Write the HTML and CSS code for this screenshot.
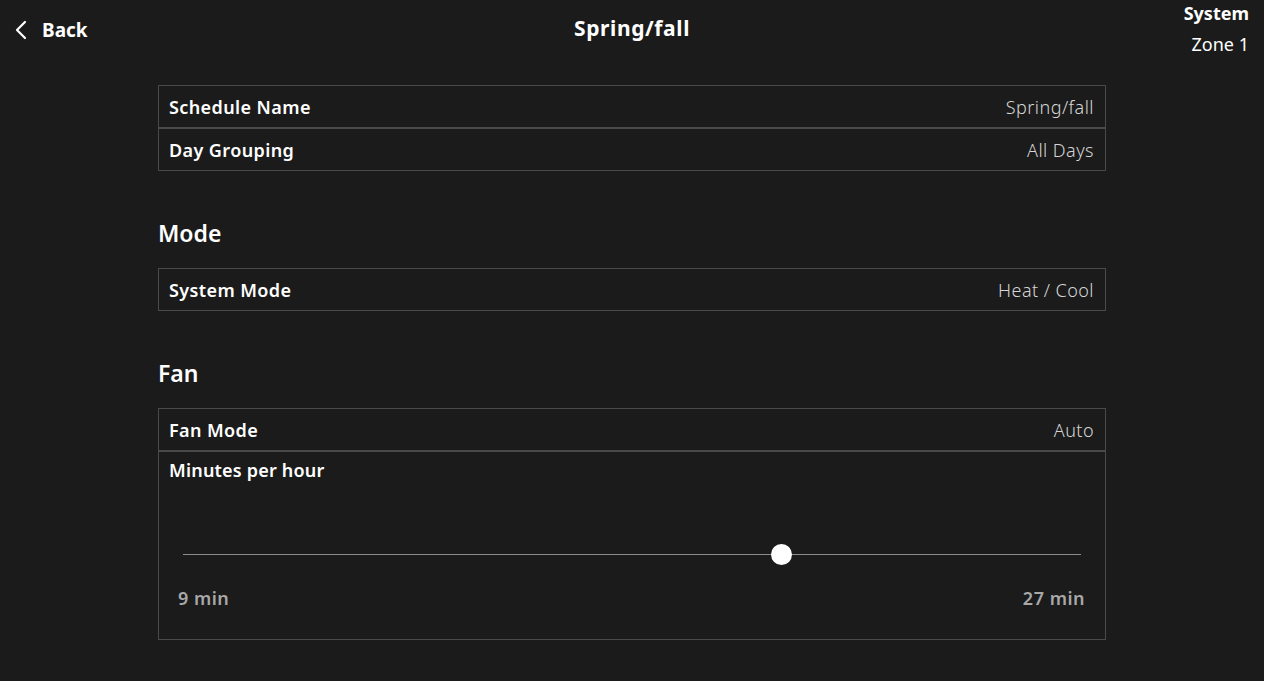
FILE: index.html
```html
<!DOCTYPE html>
<html>
<head>
<meta charset="utf-8">
<link rel="stylesheet" href="styles.css">
</head>
<body>
<div class="app">
  <header class="topbar">
    <div class="back">
      <svg class="chev" width="14" height="20" viewBox="0 0 14 20"><path d="M11 2 L3 10 L11 18" fill="none" stroke="#fff" stroke-width="2.2" stroke-linecap="round" stroke-linejoin="round"/></svg>
      <span>Back</span>
    </div>
    <div class="title">Spring/fall</div>
    <div class="zone">
      <div class="zone-top">System</div>
      <div class="zone-sub">Zone 1</div>
    </div>
  </header>

  <main class="content">
    <div class="group">
      <div class="row"><span class="label">Schedule Name</span><span class="value">Spring/fall</span></div>
      <div class="row"><span class="label">Day Grouping</span><span class="value">All Days</span></div>
    </div>

    <h2 class="section">Mode</h2>
    <div class="group">
      <div class="row"><span class="label">System Mode</span><span class="value">Heat / Cool</span></div>
    </div>

    <h2 class="section">Fan</h2>
    <div class="group">
      <div class="row"><span class="label">Fan Mode</span><span class="value">Auto</span></div>
      <div class="slider-box">
        <div class="label">Minutes per hour</div>
        <div class="track-wrap">
          <div class="track">
            <div class="thumb" style="left: 66.6%"></div>
          </div>
        </div>
        <div class="range">
          <span>9 min</span>
          <span>27 min</span>
        </div>
      </div>
    </div>
  </main>
</div>
</body>
</html>
```

FILE: styles.css
```css
* { box-sizing: border-box; }
html, body {
  margin: 0;
  padding: 0;
  background: #1b1b1b;
  color: #fff;
  font-family: "Noto Sans", "Open Sans", sans-serif;
}
.app {
  width: 1264px;
  height: 681px;
  overflow: hidden;
}
.topbar {
  display: grid;
  grid-template-columns: 1fr auto 1fr;
  align-items: start;
  height: 60px;
}
.back {
  display: flex;
  align-items: center;
  gap: 14px;
  padding: 17px 0 0 14px;
  font-weight: 700;
  font-size: 19px;
}
.chev { display: block; }
.title {
  padding-top: 13px;
  font-weight: 700;
  font-size: 21px;
  line-height: 30px;
  letter-spacing: 0.6px;
}
.zone {
  justify-self: end;
  text-align: right;
  margin-top: -1px;
  padding: 0 15px 0 0;
  font-size: 18px;
  line-height: 29px;
}
.zone-top { font-weight: 700; }
.zone-sub { margin-top: 2px; }
.content {
  width: 948px;
  margin: 25px auto 0;
}
.group {
  display: flex;
  flex-direction: column;
}
.row {
  display: flex;
  justify-content: space-between;
  align-items: center;
  height: 43px;
  border: 1px solid #4a4a4a;
  padding: 0 11px 0 10px;
}
.label {
  font-weight: 600;
  font-size: 18px;
  letter-spacing: 0.4px;
  color: #fff;
}
.value {
  font-weight: 300;
  font-size: 18px;
  letter-spacing: 0.45px;
  color: #d6d6d6;
}
.section {
  margin: 47px 0 20px;
  font-size: 23px;
  font-weight: 600;
  line-height: 30px;
}
.slider-box {
  height: 189px;
  border: 1px solid #4a4a4a;
  padding: 6px 20px 0 10px;
  display: flex;
  flex-direction: column;
}
.slider-box .label { letter-spacing: 0.2px; }
.track-wrap {
  padding: 0 4px 0 14px;
  margin-top: 72px;
}
.track {
  position: relative;
  height: 1px;
  background: #8a8a8a;
}
.thumb {
  position: absolute;
  top: -10px;
  width: 21px;
  height: 21px;
  margin-left: -10px;
  border-radius: 50%;
  background: #fff;
}
.range {
  display: flex;
  justify-content: space-between;
  margin-top: 31px;
  padding-left: 9px;
  font-size: 18px;
  letter-spacing: 0.5px;
  font-weight: 600;
  color: #a8a8a8;
}
```
